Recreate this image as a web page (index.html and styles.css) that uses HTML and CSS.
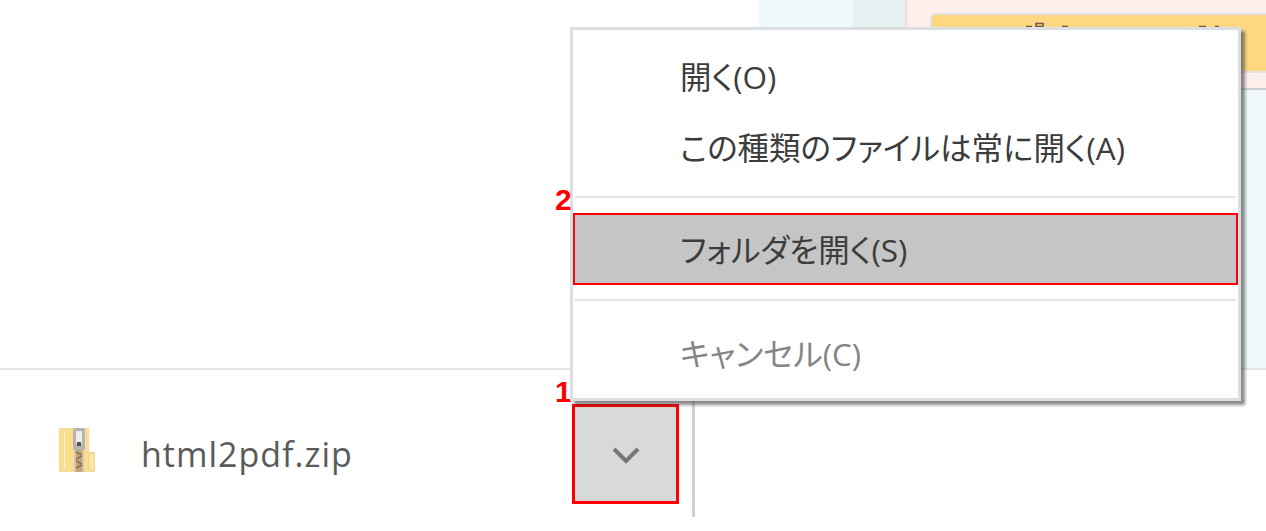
FILE: index.html
```html
<!DOCTYPE html>
<html lang="ja">
<head>
<meta charset="utf-8">
<title>html2pdf.zip</title>
<link rel="stylesheet" href="styles.css">
</head>
<body>
<div class="page">
  <div class="content">
    <div class="blank"></div>
    <div class="pane-blue"><div class="blue-a"></div><div class="blue-b"></div></div>
    <div class="pane-right">
      <div class="pane-pink">
        <div class="note">
          <svg class="note-marks" viewBox="0 0 220 6" width="220" height="6">
            <path d="M17 4.5h6M27 1.5h7v3h-7zM53 4.5h6M190 4.5h7M206 4.5h4" stroke="#6a5a48" stroke-width="1.5" fill="none"/>
          </svg>
        </div>
      </div>
      <div class="pane-low"></div>
    </div>
  </div>
  <div class="bar">
    <div class="file">
      <svg class="zip" viewBox="0 0 36 44" width="36" height="44">
        <path d="M.5.5H29.5V24.5H35.5V43.5H.5Z" fill="#fcdd8c" stroke="#f3dc9e"/>
        <path d="M30 25H35V43H30Z" fill="#fde6a6" stroke="#efd48c"/>
        <rect x="5" y="3" width="1" height="38" fill="#fff3cc"/>
        <rect x="14" y="0" width="12" height="22" rx="2" fill="#b4b5b3"/>
        <rect x="17" y="3" width="6" height="13" fill="#ededeb"/>
        <rect x="18" y="14" width="4" height="4" fill="#55534d"/>
        <path d="M15 22H25V44H15Z" fill="#cfc6b8"/>
        <path d="M17 22H23V44H17Z" fill="#c9a272"/>
        <path d="M17 24l6 3M23 28l-6 3M17 33l6 3M23 37l-6 3" stroke="#8a7058" stroke-width="1.6"/>
      </svg>
      <span class="name">html2pdf.zip</span>
    </div>
    <div class="arrow-wrap">
      <span class="callout callout-1">1</span>
      <button class="arrow" type="button">
        <svg class="chevron" viewBox="0 0 30 20" width="30" height="20"><path d="M3 3L15 15L27 3" fill="none" stroke="#767676" stroke-width="4"/></svg>
      </button>
    </div>
    <div class="bar-sep"></div>
  </div>
  <div class="menu">
    <div class="item item-first">開く(O)</div>
    <div class="item">この種類のファイルは常に開く(A)</div>
    <hr class="sep">
    <span class="callout callout-2">2</span>
    <div class="item item-active">フォルダを開く(S)</div>
    <hr class="sep sep-low">
    <div class="item item-disabled">キャンセル(C)</div>
  </div>
</div>
</body>
</html>
```
FILE: styles.css
```css
html, body { margin: 0; padding: 0; background: #fff; }
.page {
  position: relative;
  width: 1266px;
  height: 531px;
  overflow: hidden;
  font-family: "Open Sans", "Noto Sans CJK JP", sans-serif;
}
.content { display: flex; height: 368px; }
.blank { width: 759px; background: #fff; }
.pane-blue { width: 146px; display: flex; border-right: 2px solid #dfe3e3; }
.blue-a { width: 94px; background: #f0f8fb; }
.blue-b { flex: 1; background: #e9f2f3; }
.pane-right { flex: 1; display: flex; flex-direction: column; }
.pane-pink {
  height: 90px;
  box-sizing: border-box;
  background: #fdf0ec;
  padding: 13px 0 0 23px;
  border-bottom: 2px solid #c9cdcd;
}
.note {
  height: 56px;
  box-sizing: content-box;
  background: #fed880;
  border: 2px solid #e3e3e3;
  border-right: 0;
  border-radius: 5px 0 0 0;
  padding-left: 77px;
}
.note-marks { display: block; margin-top: 7px; }
.pane-low { flex: 1; background: #eff7fa; }
.bar {
  display: flex;
  align-items: stretch;
  height: 149px;
  border-top: 2px solid #e4e5e5;
  box-sizing: border-box;
  background: #fff;
}
.file { width: 572px; display: flex; align-items: flex-start; box-sizing: border-box; padding: 58px 0 0 59px; }
.zip { display: block; }
.name {
  margin-left: 46px;
  margin-top: 4px;
  font-size: 34px;
  letter-spacing: 1px;
  line-height: 44px;
  color: #5a5a5a;
}
.arrow-wrap { position: relative; width: 107px; padding-top: 34px; }
.arrow {
  display: flex;
  align-items: center;
  justify-content: center;
  width: 107px;
  height: 100px;
  padding: 0;
  background: #d8dad9;
  border: 3px solid #f00;
  box-sizing: border-box;
}
.chevron { margin-top: 4px; }
.bar-sep { width: 3px; height: 147px; margin-left: 13px; background: #d0d1d1; }
.callout {
  position: absolute;
  font-family: "Liberation Sans", sans-serif;
  font-weight: 700;
  font-size: 30px;
  line-height: 30px;
  color: #f00;
}
.callout-1 { left: -17px; top: 7px; }
.callout-2 { left: -18px; top: 155px; }
.menu {
  position: absolute;
  left: 570px;
  top: 27px;
  width: 671px;
  height: 374px;
  box-sizing: border-box;
  padding: 13px 0 0;
  background: #fff;
  border: 3px solid #dcdfe1;
  box-shadow: 4px 4px 3px rgba(60, 60, 60, .6);
}
.item {
  height: 70px;
  line-height: 70px;
  padding-left: 107px;
  font-size: 31.5px;
  font-feature-settings: "palt";
  color: #3c3c3c;
}
.item-first { line-height: 68px; }
.item-active {
  height: 72px;
  background: #c5c5c5;
  border: 2px solid #f00;
  box-sizing: border-box;
  padding-left: 105px;
  line-height: 70px;
}
.item-disabled { color: #858585; }
.sep { height: 2px; margin: 13px 2px 15px; border: 0; background: #e4e5e5; }
.sep-low { margin: 14px 2px 18px; }
```
